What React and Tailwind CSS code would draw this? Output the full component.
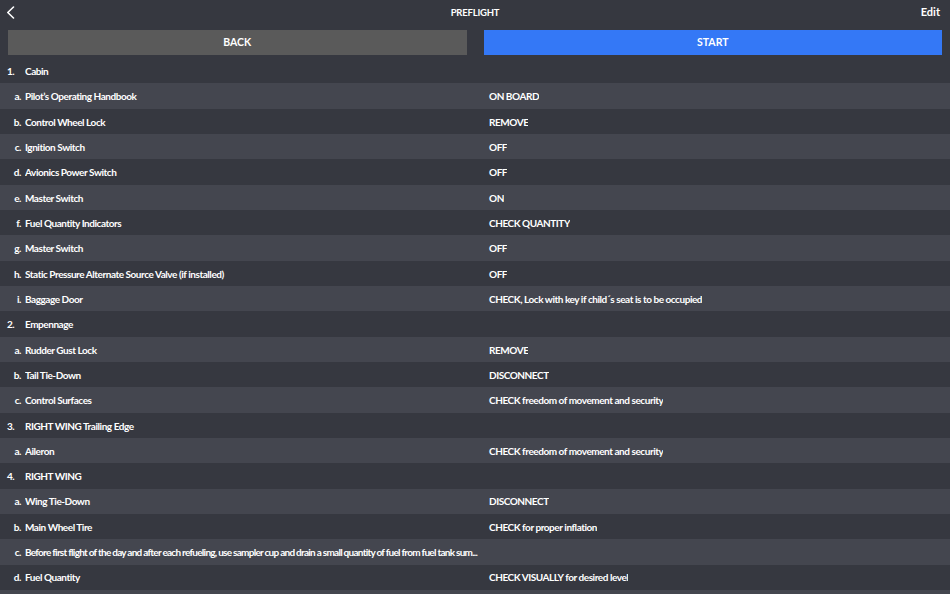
import React from "react";

const rows = [
  { n: "1.", label: "Cabin", section: true },
  { n: "a.", label: "Pilot’s Operating Handbook", value: "ON BOARD" },
  { n: "b.", label: "Control Wheel Lock", value: "REMOVE" },
  { n: "c.", label: "Ignition Switch", value: "OFF" },
  { n: "d.", label: "Avionics Power Switch", value: "OFF" },
  { n: "e.", label: "Master Switch", value: "ON" },
  { n: "f.", label: "Fuel Quantity Indicators", value: "CHECK QUANTITY" },
  { n: "g.", label: "Master Switch", value: "OFF" },
  { n: "h.", label: "Static Pressure Alternate Source Valve (if installed)", value: "OFF" },
  { n: "i.", label: "Baggage Door", value: "CHECK, Lock with key if child´s seat is to be occupied" },
  { n: "2.", label: "Empennage", section: true },
  { n: "a.", label: "Rudder Gust Lock", value: "REMOVE" },
  { n: "b.", label: "Tail Tie-Down", value: "DISCONNECT" },
  { n: "c.", label: "Control Surfaces", value: "CHECK freedom of movement and security" },
  { n: "3.", label: "RIGHT WING Trailing Edge", section: true },
  { n: "a.", label: "Aileron", value: "CHECK freedom of movement and security" },
  { n: "4.", label: "RIGHT WING", section: true },
  { n: "a.", label: "Wing Tie-Down", value: "DISCONNECT" },
  { n: "b.", label: "Main Wheel Tire", value: "CHECK for proper inflation" },
  { n: "c.", label: "Before first flight of the day and after each refueling, use sampler cup and drain a small quantity of fuel from fuel tank sum...", value: "", long: true },
  { n: "d.", label: "Fuel Quantity", value: "CHECK VISUALLY for desired level" },
];

export default function App() {
  return (
    <div
      className="w-[950px] h-[594px] overflow-hidden bg-[#363840] text-white"
      style={{ fontFamily: '"Lato", "Open Sans", sans-serif' }}
    >
      <div className="relative h-[27px] flex items-center justify-center">
        <svg className="absolute left-[6px] top-[6px]" width="9" height="13" viewBox="0 0 9 13">
          <path d="M7.5 1 L1.8 6.5 L7.5 12" fill="none" stroke="white" strokeWidth="1.6" strokeLinecap="round" strokeLinejoin="round" />
        </svg>
        <span className="text-[9.5px] font-bold tracking-[-0.2px] -mt-[1px]">PREFLIGHT</span>
        <span className="absolute right-[10px] top-[4px] text-[11px] font-bold">Edit</span>
      </div>
      <div className="flex gap-[17px] px-[8px] pt-[2.5px] pb-[3.5px]">
        <div className="flex-1 h-[25px] pt-[1.5px] bg-[#5a5a5a] flex items-center justify-center text-[10.5px] font-bold">BACK</div>
        <div className="flex-1 h-[25px] pt-[1.5px] bg-[#3478f6] flex items-center justify-center text-[10.5px] font-bold">START</div>
      </div>
      <div className="flex flex-col">
        {rows.map((r, i) => (
          <div
            key={i}
            className={`h-[25.33px] shrink-0 flex items-center pt-[1.5px] text-[10px] font-bold tracking-[-0.45px] ${i % 2 === 1 ? "bg-[#44464f]" : "bg-[#363840]"}`}
          >
            {r.section ? (
              <span className="w-[25px] shrink-0 pl-[7px]">{r.n}</span>
            ) : (
              <span className="w-[25px] shrink-0 pr-[4px] text-right">{r.n}</span>
            )}
            {r.long ? (
              <span className="whitespace-nowrap tracking-[-0.73px]">{r.label}</span>
            ) : (
              <span className="w-[456px] shrink-0 truncate">{r.label}</span>
            )}
            {!r.section && r.value ? (
              <span className="pl-[8px] truncate">{r.value}</span>
            ) : null}
          </div>
        ))}
        <div className="h-[25.33px] shrink-0 bg-[#44464f]" />
      </div>
    </div>
  );
}
